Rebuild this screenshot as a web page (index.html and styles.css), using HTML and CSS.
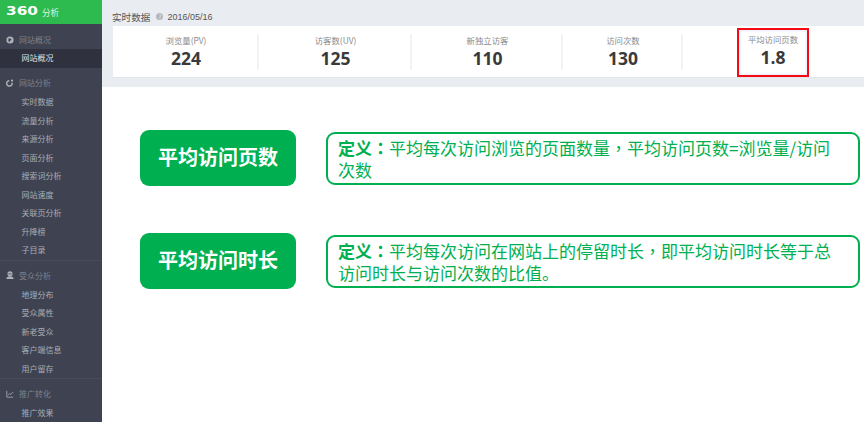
FILE: index.html
```html
<!DOCTYPE html>
<html lang="zh-CN">
<head>
    <meta charset="UTF-8">
    <title>360分析</title>
    <link rel="stylesheet" href="styles.css">
</head>
<body>
    <aside class="sidebar">
        <div class="logo"><span class="logo-num">360</span><span class="logo-name">分析</span></div>

        <div class="group first">
            <div class="group-title">
                <svg class="group-icon" viewBox="0 0 10 10"><circle cx="5" cy="5" r="4.5" fill="#aeb1b8"/><path d="M3 3h3l1 2-2 1-1 2-1-2z" fill="#3f4351"/></svg>
                网站概况
            </div>
            <div class="item active">网站概况</div>
        </div>

        <div class="group">
            <div class="group-title">
                <svg class="group-icon" viewBox="0 0 10 10"><path d="M7.5 4.5a3.4 3.4 0 1 1-3.4-2.4" fill="none" stroke="#aeb1b8" stroke-width="1.8"/><circle cx="7.5" cy="2" r="1.4" fill="#aeb1b8"/></svg>
                网站分析
            </div>
            <div class="item">实时数据</div>
            <div class="item">流量分析</div>
            <div class="item">来源分析</div>
            <div class="item">页面分析</div>
            <div class="item">搜索词分析</div>
            <div class="item">网站速度</div>
            <div class="item">关联页分析</div>
            <div class="item">升降榜</div>
            <div class="item">子目录</div>
        </div>

        <div class="group">
            <div class="group-title">
                <svg class="group-icon" viewBox="0 0 10 10"><circle cx="5" cy="3.4" r="3.2" fill="#aeb1b8"/><path d="M0.5 10q0-3.5 4.5-3.5t4.5 3.5z" fill="#aeb1b8"/><path d="M3 3.6h4" stroke="#3f4351"/></svg>
                受众分析
            </div>
            <div class="item">地理分布</div>
            <div class="item">受众属性</div>
            <div class="item">新老受众</div>
            <div class="item">客户端信息</div>
            <div class="item">用户留存</div>
        </div>

        <div class="group">
            <div class="group-title">
                <svg class="group-icon" viewBox="0 0 10 10"><path d="M1 1v8h8M2.5 6.5l2-2 1.5 1 3-3" fill="none" stroke="#aeb1b8" stroke-width="1"/></svg>
                推广转化
            </div>
            <div class="item">推广效果</div>
        </div>
    </aside>

    <main class="main">
        <section class="summary">
            <div class="summary-head">
                <span class="summary-title">实时数据</span>
                <span class="help">?</span>
                <span class="summary-date">2016/05/16</span>
            </div>
            <div class="stats">
                <div class="stat"><div class="stat-label">浏览量(PV)</div><div class="stat-value">224</div></div>
                <div class="stat"><div class="stat-label">访客数(UV)</div><div class="stat-value">125</div></div>
                <div class="stat"><div class="stat-label">新独立访客</div><div class="stat-value">110</div></div>
                <div class="stat"><div class="stat-label">访问次数</div><div class="stat-value">130</div></div>
                <div class="stat last">
                    <div class="highlight">
                        <div class="stat-label">平均访问页数</div><div class="stat-value">1.8</div>
                    </div>
                </div>
            </div>
        </section>

        <section class="terms">
            <div class="term">
                <div class="term-name">平均访问页数</div>
                <p class="term-def"><b>定义<span class="punct" lang="zh-TW">：</span></b>平均每次访问浏览的页面数量<span class="punct" lang="zh-TW">，</span>平均访问页数=浏览量/访问次数</p>
            </div>
            <div class="term">
                <div class="term-name">平均访问时长</div>
                <p class="term-def"><b>定义<span class="punct" lang="zh-TW">：</span></b>平均每次访问在网站上的停留时长<span class="punct" lang="zh-TW">，</span>即平均访问时长等于总访问时长与访问次数的比值。</p>
            </div>
        </section>
    </main>
</body>
</html>
```

FILE: styles.css
```css
* {
    box-sizing: border-box;
}

html, body {
    height: 100%;
}

body {
    margin: 0;
    display: flex;
    overflow: hidden;
    background-color: #fff;
    font-family: "Noto Sans CJK SC", "Liberation Sans", sans-serif;
}

.sidebar {
    width: 102px;
    flex-shrink: 0;
    height: 422px;
    overflow: hidden;
    background-color: #3f4351;
}

.logo {
    height: 24px;
    display: flex;
    align-items: center;
    padding-left: 6px;
    background-color: #2dbb4f;
    color: #fff;
}

.logo-num {
    width: 32px;
    font-family: "DejaVu Sans", sans-serif;
    font-size: 11.5px;
    font-weight: bold;
    line-height: 1;
    transform: scaleX(1.33);
    transform-origin: left center;
}

.logo-name {
    margin-left: 4px;
    font-size: 8.6px;
    color: #dff5e4;
}

.group {
    padding-top: 5px;
    border-bottom: 1px solid #484c5a;
}

.group.first {
    padding-top: 6px;
    border-bottom: none;
}

.group-title {
    height: 19px;
    margin-bottom: 1px;
    display: flex;
    align-items: center;
    gap: 5px;
    padding-left: 6px;
    font-size: 8px;
    color: #7d818c;
}

.group.first .group-title {
    margin-bottom: 0;
}

.group-icon {
    width: 8px;
    height: 8px;
}

.item {
    height: 18.5px;
    line-height: 18.5px;
    padding-left: 21.5px;
    font-size: 8px;
    color: #a9acb4;
}

.item.active {
    height: 19px;
    background-color: #2f323e;
    color: #dfe1e5;
}

.main {
    flex: 1;
    min-width: 0;
}

.summary {
    height: 87px;
    padding: 7px 0 0 11px;
    background-color: #e9edf1;
}

.summary-head {
    height: 19px;
    display: flex;
    align-items: center;
    padding-left: 0;
    color: #555;
}

.summary-title {
    margin-left: -1px;
    font-size: 9.6px;
}

.help {
    width: 7px;
    height: 7px;
    margin: 0 4px 0 6px;
    border-radius: 50%;
    background-color: #b4b8bd;
    color: #e9edf1;
    font-size: 6px;
    line-height: 7px;
    text-align: center;
}

.summary-date {
    font-family: "Liberation Sans", sans-serif;
    font-size: 9px;
}

.stats {
    height: 52px;
    display: grid;
    grid-template-columns: 146px 153px 151px 120px 1fr;
    align-items: center;
    background-color: #fff;
    border-bottom: 1px solid #e1e4e8;
    text-align: center;
}

.stat {
    height: 36px;
    padding-left: 2px;
    border-right: 2px solid #f1f3f4;
}

.stat.last {
    border-right: none;
    padding-left: 0;
    display: flex;
    justify-content: center;
    align-items: center;
    margin-left: -1px;
}

.stat-label {
    height: 13px;
    line-height: 13px;
    font-size: 8.4px;
    color: #8a8a8a;
}

.stat-value {
    height: 22px;
    line-height: 22px;
    font-family: "Open Sans", sans-serif;
    font-size: 17.5px;
    font-weight: bold;
    color: #3a3a3a;
}

.highlight {
    width: 72px;
    height: 49px;
    margin-top: 2px;
    padding-top: 3px;
    border: 2px solid #f50a14;
    box-shadow: inset 0 0 3px 1px #e6ebfa;
    flex-shrink: 0;
}

.terms {
    padding: 43px 0 0 38px;
    display: flex;
    flex-direction: column;
    gap: 47px;
}

.term {
    display: flex;
    align-items: center;
    gap: 30px;
}

.term-name {
    width: 156px;
    height: 56px;
    flex-shrink: 0;
    border-radius: 9px;
    background-color: #00b050;
    color: #fff;
    font-size: 20px;
    font-weight: bold;
    line-height: 54px;
    text-align: center;
}

.term-def {
    width: 534px;
    height: 53px;
    margin: 0;
    padding: 3px 14px 0 10px;
    border: 2px solid #00b050;
    border-radius: 9px;
    color: #00b050;
    font-size: 17px;
    line-height: 22px;
}

.punct {
    font-family: "Noto Sans CJK TC", sans-serif;
}
```
